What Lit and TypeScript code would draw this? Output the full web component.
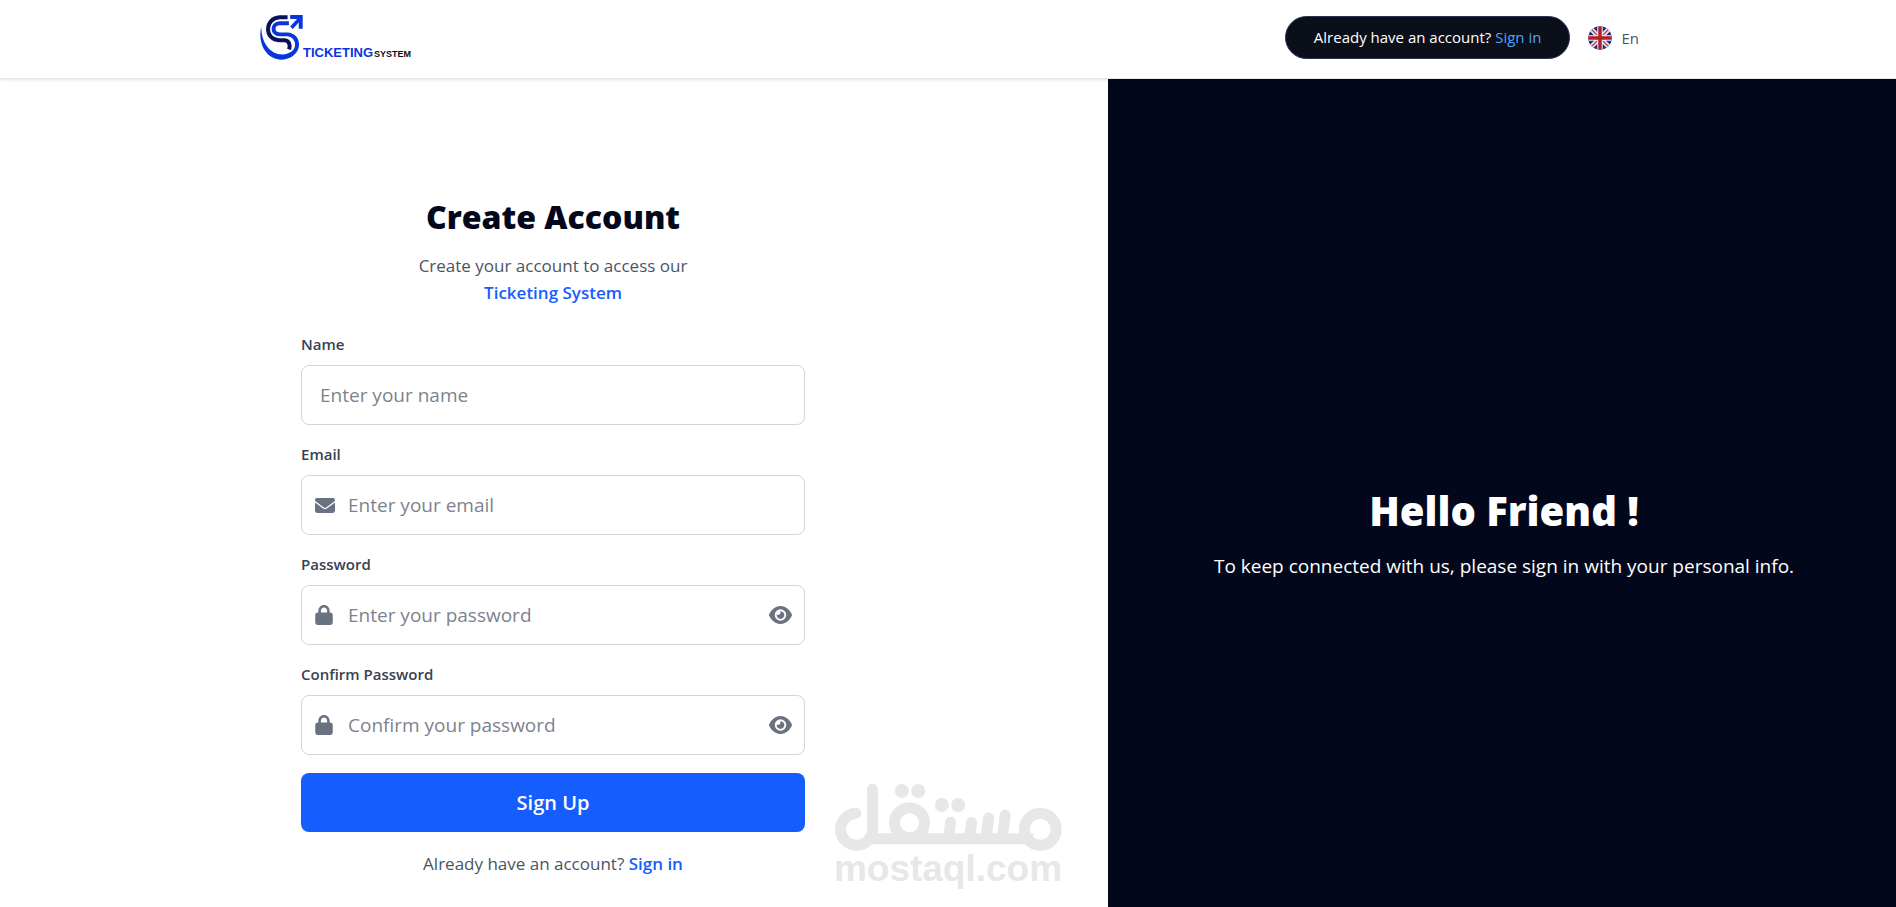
import { LitElement, html, css, svg, nothing } from "lit";
import { customElement, property, state } from "lit/decorators.js";

const glyphs = {
  mail: {
    box: "0 64 512 384",
    d: "M48 64C21.5 64 0 85.5 0 112c0 15.1 7.1 29.3 19.2 38.4L236.8 313.6c11.4 8.5 27 8.5 38.4 0L492.8 150.4c12.1-9.1 19.2-23.3 19.2-38.4c0-26.5-21.5-48-48-48L48 64zM0 176L0 384c0 35.3 28.7 64 64 64l384 0c35.3 0 64-28.7 64-64l0-208L294.4 339.2c-22.8 17.1-54 17.1-76.8 0L0 176z",
  },
  lock: {
    box: "0 0 448 512",
    d: "M144 144v48H304V144c0-44.2-35.8-80-80-80s-80 35.8-80 80zM80 192V144C80 64.5 144.5 0 224 0s144 64.5 144 144v48h16c35.3 0 64 28.7 64 64V448c0 35.3-28.7 64-64 64H64c-35.3 0-64-28.7-64-64V256c0-35.3 28.7-64 64-64H80z",
  },
  eye: {
    box: "0 32 576 448",
    d: "M288 32c-80.8 0-145.5 36.8-192.6 80.6C48.6 156 17.3 208 2.5 243.7c-3.3 7.9-3.3 16.7 0 24.6C17.3 304 48.6 356 95.4 399.4C142.5 443.2 207.2 480 288 480s145.5-36.8 192.6-80.6c46.8-43.5 78.1-95.4 93-131.1c3.3-7.9 3.3-16.7 0-24.6c-14.9-35.7-46.2-87.7-93-131.1C433.5 68.8 368.8 32 288 32zM144 256a144 144 0 1 1 288 0 144 144 0 1 1 -288 0zm144-64c0 35.3-28.7 64-64 64c-7.1 0-13.9-1.2-20.3-3.3c-5.5-1.8-11.9 1.6-11.7 7.4c.3 6.9 1.3 13.8 3.2 20.7c13.7 51.2 66.4 81.6 117.6 67.9s81.6-66.4 67.9-117.6c-11.1-41.5-47.8-69.4-88.6-71.1c-5.8-.2-9.2 6.1-7.4 11.7c2.1 6.4 3.3 13.2 3.3 20.3z",
  },
};

type Glyph = keyof typeof glyphs;

const glyph = (name: Glyph, cls: string) => html`
  <svg class=${cls} viewBox=${glyphs[name].box} aria-hidden="true">
    ${svg`<path fill="currentColor" d=${glyphs[name].d} />`}
  </svg>
`;

@customElement("text-field")
export class TextField extends LitElement {
  @property() label = "";
  @property() hint = "";
  @property() type = "text";
  @property() icon?: Glyph;
  @state() private revealed = false;

  static styles = css`
    :host {
      display: block;
    }
    .label {
      display: block;
      margin-bottom: 9px;
      font-size: 15px;
      line-height: 24px;
      font-weight: 600;
      color: #364153;
    }
    .box {
      display: flex;
      align-items: center;
      gap: 13px;
      height: 60px;
      padding: 0 12px 0 18px;
      box-sizing: border-box;
      border: 1px solid #d1d5dc;
      border-radius: 8px;
      background: #fff;
      color: #6a7282;
    }
    .box.with-icon {
      padding-left: 13px;
    }
    .box:focus-within {
      border-color: #155dfc;
    }
    .mail {
      width: 20px;
      height: 15px;
    }
    .lock {
      width: 18px;
      height: 20px;
      margin-right: 2px;
    }
    .eye {
      display: block;
      width: 23px;
      height: 18px;
    }
    .input {
      flex: 1;
      min-width: 0;
      height: 100%;
      padding: 0;
      border: 0;
      outline: 0;
      background: none;
      font: inherit;
      font-size: 19px;
      color: #1e2939;
    }
    .input::placeholder {
      color: #7d838e;
      opacity: 1;
    }
    .toggle {
      padding: 0;
      border: 0;
      background: none;
      color: inherit;
      cursor: pointer;
    }
  `;

  render() {
    const secret = this.type === "password";
    return html`
      <label class="label" for="control">${this.label}</label>
      <div class="box ${this.icon ? "with-icon" : ""}">
        ${this.icon ? glyph(this.icon, this.icon) : nothing}
        <input
          class="input"
          id="control"
          type=${secret && this.revealed ? "text" : this.type}
          placeholder=${this.hint}
        />
        ${secret
          ? html`<button
              class="toggle"
              type="button"
              aria-label="Show password"
              @click=${() => (this.revealed = !this.revealed)}
            >
              ${glyph("eye", "eye")}
            </button>`
          : nothing}
      </div>
    `;
  }
}

@customElement("site-header")
export class SiteHeader extends LitElement {
  static styles = css`
    :host {
      display: block;
      position: relative;
      background: #fff;
      border-bottom: 1px solid #e5e7eb;
      box-shadow: 0 1px 3px rgba(0, 0, 0, 0.12);
    }
    .bar {
      display: flex;
      align-items: center;
      justify-content: space-between;
      height: 78px;
      max-width: 1382px;
      margin: 0 auto;
    }
    .brand {
      display: flex;
      align-items: flex-end;
      height: 45px;
      margin: 0 0 4px 2px;
      text-decoration: none;
      font-family: "Liberation Sans Narrow", "Liberation Sans", sans-serif;
      font-weight: 700;
      line-height: 14px;
    }
    .mark {
      width: 44px;
      height: 45px;
    }
    .brand-main {
      font-size: 13px;
      color: #0a35dc;
    }
    .brand-sub {
      margin-left: 1px;
      font-size: 9px;
      line-height: 12px;
      color: #0b0b1a;
    }
    .actions {
      display: flex;
      align-items: center;
      gap: 18px;
      margin-bottom: 3px;
    }
    .pill {
      padding: 0 28px;
      border: 1px solid #2a3350;
      border-radius: 22px;
      background: #0b0f19;
      color: #fff;
      font-size: 15px;
      line-height: 41px;
      white-space: nowrap;
    }
    .pill-link {
      color: #51a2ff;
      text-decoration: none;
    }
    .lang {
      display: flex;
      align-items: center;
      gap: 9px;
      padding: 0;
      border: 0;
      background: none;
      font: inherit;
      font-size: 15px;
      color: #4a5565;
      cursor: pointer;
    }
    .flag {
      width: 24px;
      height: 24px;
    }
  `;

  render() {
    return html`
      <header class="bar">
        <a class="brand" href="#home">
          <svg class="mark" viewBox="60 44 132 137" fill="none" aria-hidden="true">
            <path
              d="M66 79 C54 130 80 180 128 180 C158 180 181 158 181 134 L169 134 C169 150 154 164 130 164 C94 164 66 130 66 79 Z"
              fill="#0a35dc"
            />
            <path
              d="M150 69 H122 C97 70 97 102 122 103 H146 C164 104 175 118 175 135"
              stroke="#0a35dc"
              stroke-width="12"
            />
            <path
              d="M146 51 H122 C76 53 74 119 120 121 H138 C150 122 155 134 151 149"
              stroke="#06125c"
              stroke-width="12"
            />
            <path d="M154 50 H186 V86" stroke="#0a35dc" stroke-width="12" />
            <path d="M158 83 L186 52" stroke="#0a35dc" stroke-width="11" />
          </svg>
          <span class="brand-main">TICKETING</span>
          <span class="brand-sub">SYSTEM</span>
        </a>
        <div class="actions">
          <div class="pill">
            Already have an account?
            <a class="pill-link" href="#sign-in">Sign in</a>
          </div>
          <button class="lang" type="button">
            <svg class="flag" viewBox="0 0 48 48" aria-hidden="true">
              <clipPath id="disc"><circle cx="24" cy="24" r="23.5" /></clipPath>
              <g clip-path="url(#disc)">
                <rect width="48" height="48" fill="#1b2f86" />
                <path d="M0 0 48 48M48 0 0 48" stroke="#f3f1f5" stroke-width="9" />
                <path d="M0 0 48 48M48 0 0 48" stroke="#c4434f" stroke-width="3" />
                <path d="M24 0V48M0 24H48" stroke="#f3f1f5" stroke-width="11" />
                <path d="M24 0V48M0 24H48" stroke="#b31f28" stroke-width="7" />
              </g>
            </svg>
            <span>En</span>
          </button>
        </div>
      </header>
    `;
  }
}

@customElement("brand-watermark")
export class BrandWatermark extends LitElement {
  static styles = css`
    :host {
      display: flex;
      flex-direction: column;
      align-items: center;
      color: #e7e7e7;
      pointer-events: none;
    }
    .script {
      width: 228px;
      height: 67px;
    }
    .domain {
      font-family: "Liberation Sans", sans-serif;
      font-size: 37px;
      line-height: 36px;
      font-weight: 700;
    }
  `;

  render() {
    return html`
      <svg
        class="script"
        viewBox="42 42 684 201"
        fill="none"
        stroke="currentColor"
        stroke-width="33"
        stroke-linecap="round"
        aria-hidden="true"
      >
        <path d="M108 130 A48 48 0 1 0 158 178 V58" />
        <path d="M150 206 H640" stroke-linecap="butt" />
        <circle cx="269" cy="158" r="45" />
        <circle cx="661" cy="178" r="48" />
        <path d="M392 157 L388 195 M455 157 L450 195 M506 144 L500 195 M556 136 L548 195" />
        <g fill="currentColor" stroke="none">
          <circle cx="246" cy="63" r="21" />
          <circle cx="295" cy="63" r="21" />
          <circle cx="366" cy="105" r="21" />
          <circle cx="415" cy="105" r="21" />
        </g>
      </svg>
      <span class="domain">mostaql.com</span>
    `;
  }
}

@customElement("app-root")
export class AppRoot extends LitElement {
  static styles = css`
    :host {
      display: flex;
      flex-direction: column;
      position: relative;
      min-height: 100vh;
      background: #fff;
      font-family: "Segoe UI", "Open Sans", "Noto Sans", sans-serif;
    }
    .columns {
      flex: 1;
      display: grid;
      grid-template-columns: minmax(0, 45fr) minmax(0, 32fr);
    }
    .signup {
      display: flex;
      justify-content: center;
      padding: 114px 24px 20px 22px;
    }
    .form {
      display: flex;
      flex-direction: column;
      width: 100%;
      max-width: 504px;
    }
    .title {
      margin: 0;
      font-size: 32px;
      line-height: 48px;
      font-weight: 800;
      text-align: center;
      color: #02071c;
    }
    .lead {
      margin: 11px 0 26px;
      font-size: 17px;
      line-height: 27px;
      text-align: center;
      color: #4a5565;
    }
    .product {
      display: block;
      font-weight: 600;
      color: #155dfc;
    }
    .fields {
      display: grid;
      gap: 17px;
    }
    .submit {
      height: 59px;
      margin-top: 18px;
      border: 0;
      border-radius: 8px;
      background: #155dfc;
      color: #fff;
      font: inherit;
      font-size: 20px;
      font-weight: 600;
      cursor: pointer;
    }
    .switch {
      margin: 18px 0 0;
      font-size: 17px;
      line-height: 27px;
      text-align: center;
      color: #4a5565;
    }
    .link {
      font-weight: 600;
      color: #155dfc;
      text-decoration: none;
    }
    .welcome {
      position: relative;
      z-index: 1;
      display: flex;
      flex-direction: column;
      align-items: center;
      justify-content: center;
      gap: 12px;
      padding: 78px 12px 0 16px;
      background: #02071c;
      color: #fff;
      text-align: center;
    }
    .hello {
      margin: 0;
      font-size: 40px;
      line-height: 56px;
      font-weight: 800;
    }
    .note {
      margin: 0;
      font-size: 19px;
      line-height: 30px;
    }
    .watermark {
      position: absolute;
      left: 50%;
      bottom: 20px;
      transform: translateX(-50%);
    }
  `;

  render() {
    return html`
      <site-header></site-header>
      <main class="columns">
        <section class="signup">
          <form class="form" @submit=${(e: Event) => e.preventDefault()}>
            <h1 class="title">Create Account</h1>
            <p class="lead">
              Create your account to access our
              <span class="product">Ticketing System</span>
            </p>
            <div class="fields">
              <text-field label="Name" hint="Enter your name"></text-field>
              <text-field label="Email" hint="Enter your email" type="email" icon="mail"></text-field>
              <text-field label="Password" hint="Enter your password" type="password" icon="lock"></text-field>
              <text-field label="Confirm Password" hint="Confirm your password" type="password" icon="lock"></text-field>
            </div>
            <button class="submit" type="submit">Sign Up</button>
            <p class="switch">
              Already have an account?
              <a class="link" href="#sign-in">Sign in</a>
            </p>
          </form>
        </section>
        <section class="welcome">
          <h2 class="hello">Hello Friend !</h2>
          <p class="note">To keep connected with us, please sign in with your personal info.</p>
        </section>
      </main>
      <brand-watermark class="watermark"></brand-watermark>
    `;
  }
}
